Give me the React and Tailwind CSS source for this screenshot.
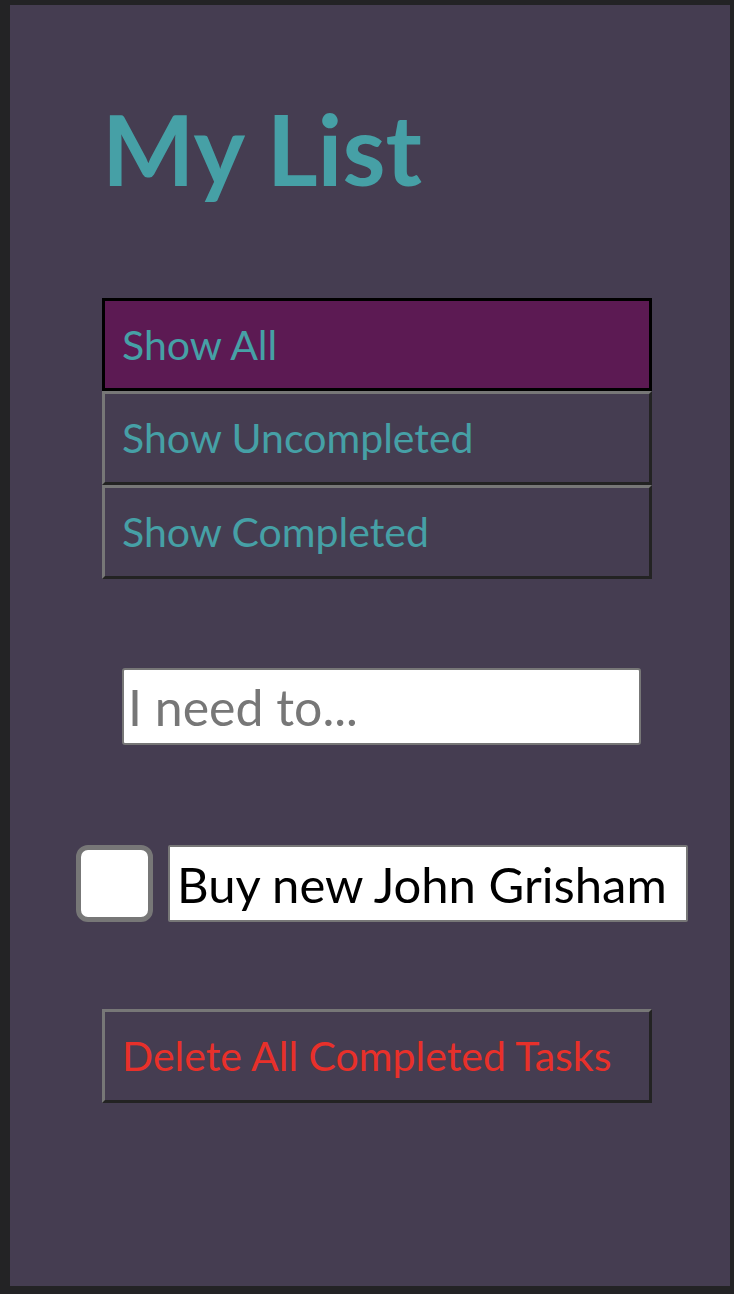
import { useState } from 'react';

const font = { fontFamily: 'Lato, "Open Sans", sans-serif' };

const filters = ['Show All', 'Show Uncompleted', 'Show Completed'];

export default function App() {
  const [active, setActive] = useState('Show All');
  const [done, setDone] = useState(false);

  return (
    <div className="min-h-[1294px] w-[734px] bg-[#232325] pt-[5px] pl-[10px]" style={font}>
      <div className="flex h-[1281px] w-[720px] flex-col bg-[#453d51] pl-[92px]">
        <h1 className="mt-[83px] h-[120px] text-[98px] font-bold leading-[120px] text-[#46a0a6]">My List</h1>

        {/* filter buttons */}
        <div className="mt-[90px] flex w-[550px] flex-col">
          {filters.map((label) => (
            <button
              key={label}
              onClick={() => setActive(label)}
              className={
                active === label
                  ? 'h-[93px] border-[3px] border-black bg-[#5c1a53] pl-[17px] text-left text-[41px] text-[#46a0a6]'
                  : 'h-[94px] border-[3px] border-t-[#777777] border-l-[#777777] border-b-[#232323] border-r-[#232323] bg-transparent pl-[17px] text-left text-[41px] text-[#46a0a6]'
              }
            >
              {label}
            </button>
          ))}
        </div>

        {/* new task */}
        <input
          placeholder="I need to..."
          className="mt-[89px] ml-[20px] h-[77px] w-[519px] rounded-[3px] border-2 border-[#777777] bg-white px-[4px] text-[50px] text-black outline-none placeholder:text-[#777777]"
        />

        {/* task list */}
        <div className="mt-[100px] ml-[-26px] flex items-center gap-[15px]">
          <button
            onClick={() => setDone(!done)}
            className="h-[77px] w-[77px] rounded-[12px] border-[5px] border-[#777777] bg-white"
          >
            {done && <span className="text-[40px] text-[#46a0a6]">✓</span>}
          </button>
          <input
            defaultValue="Buy new John Grisham"
            className="h-[77px] w-[520px] rounded-[2px] border-2 border-[#777777] bg-white px-[7px] text-[49px] text-black outline-none"
          />
        </div>

        <button className="mt-[87px] h-[94px] w-[550px] border-[3px] border-t-[#777777] border-l-[#777777] border-b-[#232323] border-r-[#232323] pl-[17px] text-left text-[41px] text-[#e8302a]">
          Delete All Completed Tasks
        </button>
      </div>
    </div>
  );
}
